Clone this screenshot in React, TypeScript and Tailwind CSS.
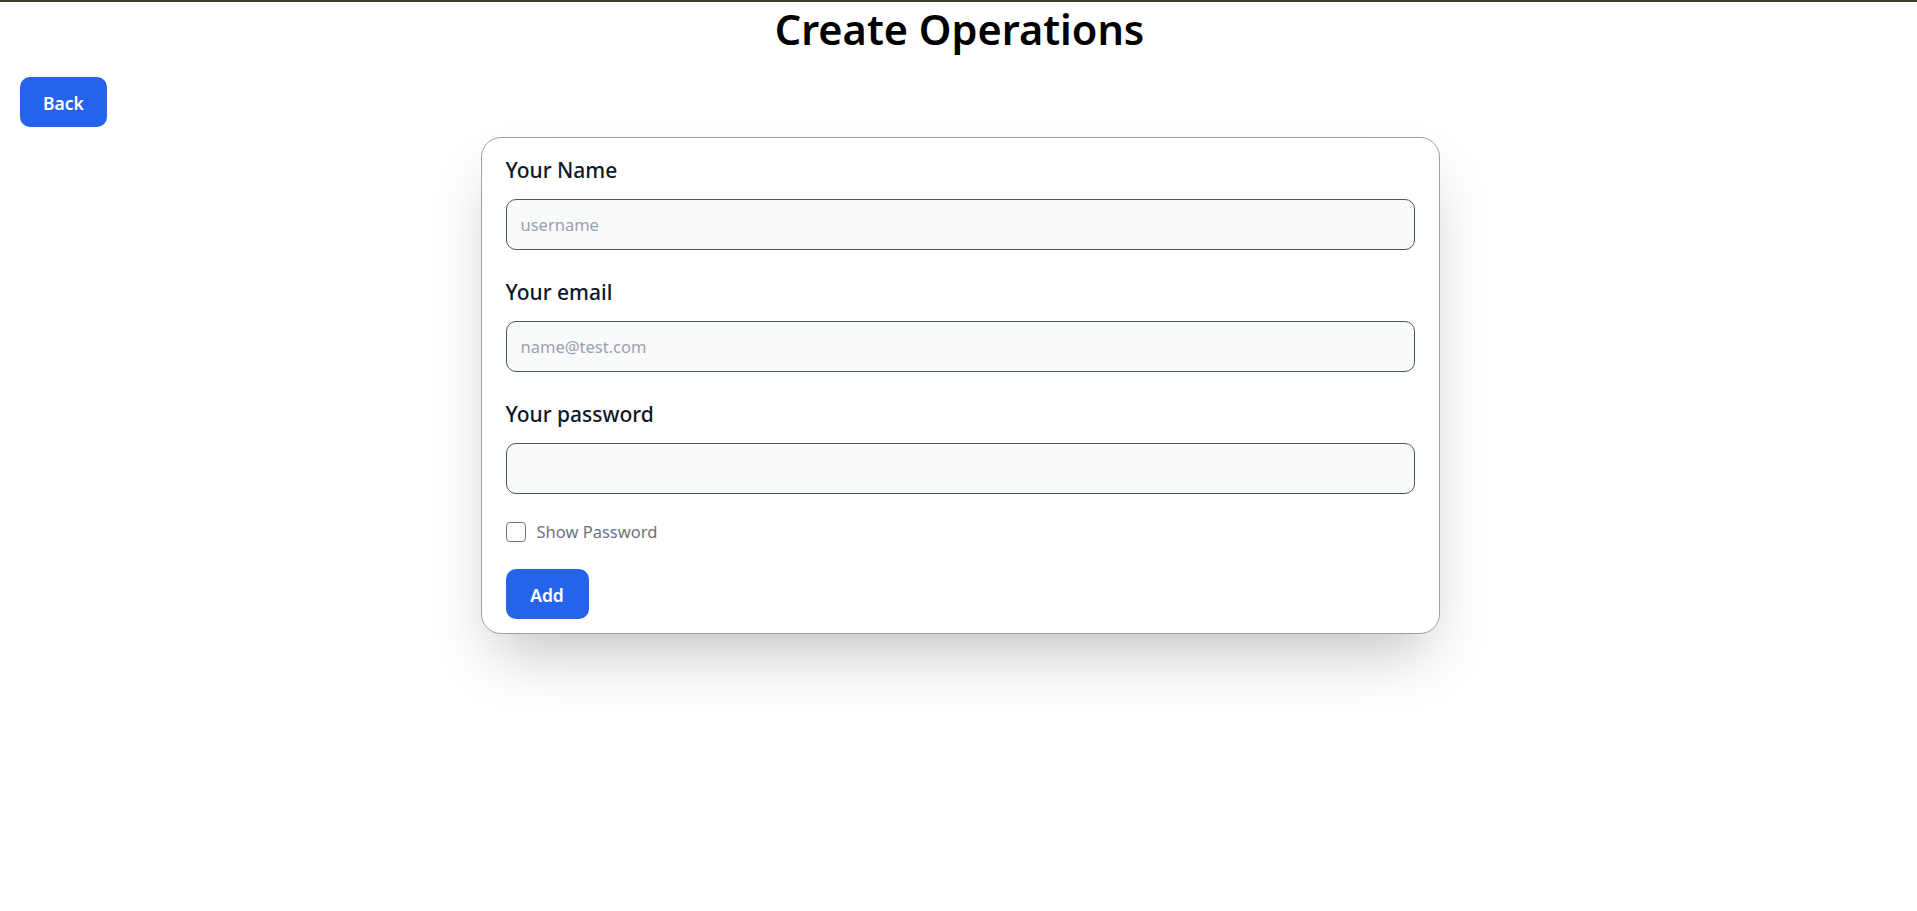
import React, { useState } from "react";

export default function App() {
  const [show, setShow] = useState(false);
  const font = { fontFamily: '"Noto Sans", "Open Sans", sans-serif' };
  return (
    <div className="min-h-screen bg-white text-black" style={font}>
      <div className="h-[2px] bg-[#3b3e2a]" />
      <h1 className="h-[56px] pl-[2px] text-center text-[41.5px] leading-[54px] font-semibold text-black">
        Create Operations
      </h1>
      <div className="ml-[20px] mt-[19px]">
        <button className="h-[50px] w-[87px] rounded-[10px] bg-[#2563eb] pt-[2px] text-[17.5px] font-semibold text-white">
          Back
        </button>
      </div>
      <div className="pl-[3px]">
        <div className="mx-auto mt-[10px] w-[959px] rounded-[20px] border border-gray-400 bg-white px-[24px] pt-[17px] pb-[14px] shadow-[0_31px_62px_-15px_rgba(0,0,0,0.25)]">
          <Field label="Your Name" placeholder="username" type="text" />
          <Field label="Your email" placeholder="name@test.com" type="email" />
          <div>
            <label className="block h-[30px] text-[21px] leading-[30px] font-medium text-gray-900">
              Your password
            </label>
            <input
              type={show ? "text" : "password"}
              className="mt-[13.5px] block h-[51px] w-full rounded-[10px] border border-gray-600 bg-gray-50 pl-[14px] text-[16.5px] outline-none"
            />
          </div>
          <div className="mt-[25.5px] flex h-[25px] items-center">
            <input
              type="checkbox"
              checked={show}
              onChange={() => setShow(!show)}
              className="h-[20px] w-[20px] appearance-none rounded-[4px] border border-gray-500 bg-white"
            />
            <span className="ml-[11px] text-[16.5px] leading-[25px] font-normal text-gray-500">
              Show Password
            </span>
          </div>
          <button className="mt-[24.5px] block h-[50px] w-[83px] rounded-[10px] bg-[#2563eb] pt-[2px] text-[17.5px] font-semibold text-white">
            Add
          </button>
        </div>
      </div>
    </div>
  );
}

function Field({
  label,
  placeholder,
  type,
}: {
  label: string;
  placeholder: string;
  type: string;
}) {
  return (
    <div className="mb-[27.7px]">
      <label className="block h-[30px] text-[21px] leading-[30px] font-medium text-gray-900">
        {label}
      </label>
      <input
        type={type}
        placeholder={placeholder}
        className="mt-[13.5px] block h-[51px] w-full rounded-[10px] border border-gray-600 bg-gray-50 pl-[14px] text-[16.5px] text-gray-900 outline-none placeholder:text-gray-400"
      />
    </div>
  );
}
